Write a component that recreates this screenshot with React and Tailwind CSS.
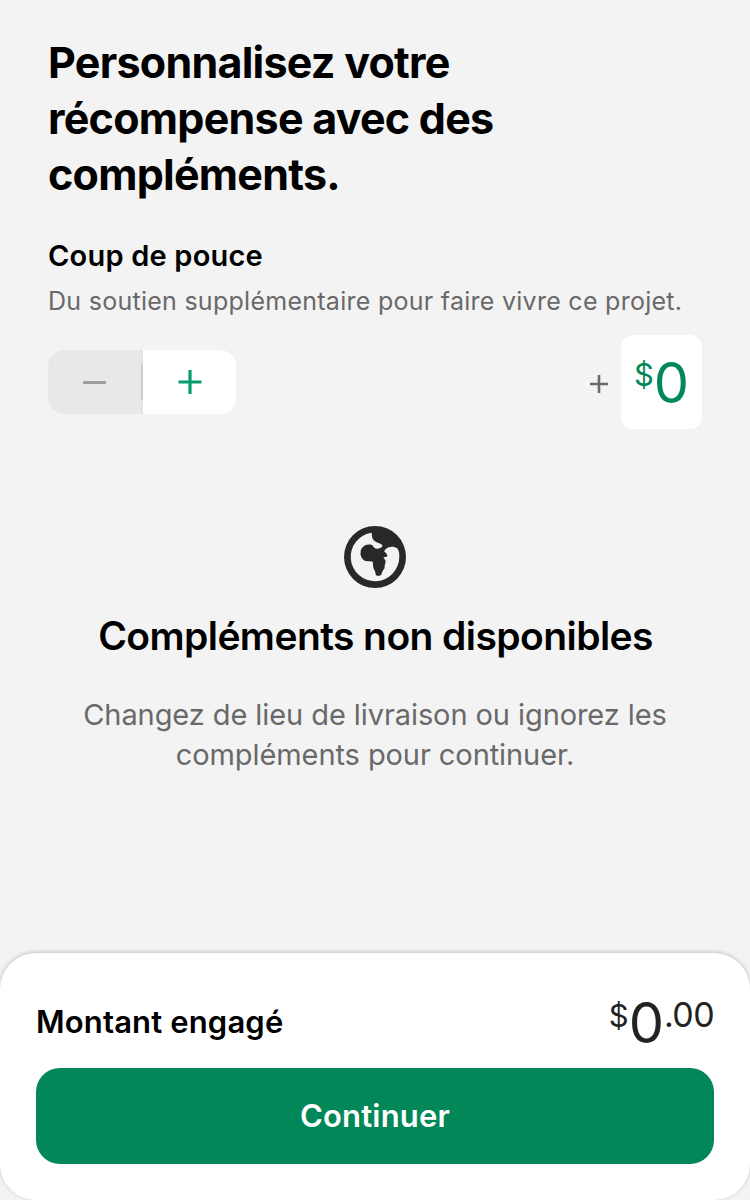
function Stepper() {
  return (
    <div className="flex h-16 w-[188px] overflow-hidden rounded-2xl bg-white">
      <button className="flex h-full w-[95px] items-center bg-[#e8e8e8] pl-[35px]" aria-label="Diminuer">
        <span className="h-[3px] w-[23px] rounded-[1px] bg-[#9b9f9c]" />
        <span className="ml-auto h-full w-0.5 bg-[#e3e3e3] py-3.5">
          <span className="block h-9 w-0.5 bg-[#cecece]" />
        </span>
      </button>
      <button className="flex h-full flex-1 items-center justify-center" aria-label="Augmenter">
        <svg width="24" height="24" viewBox="0 0 24 24" fill="none" stroke="#039d70" strokeWidth="3.2">
          <path d="M12 0v24M0.5 12h23" />
        </svg>
      </button>
    </div>
  );
}

function Globe() {
  return (
    <svg width="62" height="62" viewBox="0 0 62 62">
      <circle cx="31" cy="31" r="31" fill="#282828" />
      <path
        fill="#f3f3f3"
        d="M27.6 6.8C28 9.5 27.8 12 29.3 13.8C31.2 16 34.5 17.2 37.4 18.2Q39 19.3 38.2 20.8C36 22.4 33.8 23.2 31.5 22.4C29.2 21.4 29.3 20 28 19C25.5 18.4 23.5 18.5 21 19.2L18 21.8L16.7 24.5L16.5 28.6C17.2 31.8 18.8 33.8 21 34.9L28.5 35.6C29.3 37.4 28.7 39.9 29.5 42.2L31.2 45.8L31.9 49.2L34.5 50.1L37.2 48.9L38.4 45.4L40.6 42C40.2 39.5 41.8 37 41.6 34.8L39.4 31.2L43 30.8L43.4 29.4L42.2 27.2L40.2 25.6L41 23.8C43.5 20.8 49.5 19.5 53.4 22.5C55.1 25 55.5 28 55.3 31.4A24.3 24.3 0 1 1 27.6 6.8Z"
      />
    </svg>
  );
}

export default function App() {
  return (
    <div className="flex h-[1200px] w-[750px] flex-col overflow-hidden bg-[#f3f3f3] font-['Inter','Liberation_Sans',sans-serif] text-black">
      <main className="flex-1 px-12 pt-[34px]">
        <h1 className="text-[43px] font-bold leading-[56px] tracking-[-0.74px]">
          Personnalisez votre<br />récompense avec des<br />compléments.
        </h1>
        <h2 className="mt-[34px] text-[29px] font-semibold leading-10 tracking-[0.2px]">Coup de pouce</h2>
        <p className="mt-[7px] whitespace-nowrap text-[25px] leading-9 tracking-[0.27px] text-[#696969]">Du soutien supplémentaire pour faire vivre ce projet.</p>
        <div className="mt-4 flex h-[94px] items-center justify-between">
          <Stepper />
          <div className="flex items-center">
            <svg className="mr-[13px] mt-1" width="18" height="18" viewBox="0 0 18 18" fill="none" stroke="#696969" strokeWidth="2.6">
              <path d="M9 0v18M0 9h18" />
            </svg>
            <div className="flex h-[94px] w-[81px] items-start justify-center rounded-xl bg-white text-[#028858]">
              <span className="mt-5 text-[31px] leading-10">$</span>
              <span className="mt-[18px] text-[56px] leading-[60px]">0</span>
            </div>
          </div>
        </div>
        <section className="mt-[97px] flex flex-col items-center text-center">
          <Globe />
          <h2 className="mt-[23px] whitespace-nowrap pl-px text-[39px] font-semibold leading-[50px] tracking-[-0.58px]">Compléments non disponibles</h2>
          <p className="mt-[34px] whitespace-nowrap text-[29px] leading-10 tracking-[-0.08px] text-[#696969]">Changez de lieu de livraison ou ignorez les<br />compléments pour continuer.</p>
        </section>
      </main>
      <footer className="h-[247px] rounded-[36px] bg-white px-9 pt-[35px] shadow-[0_-1px_4px_rgba(0,0,0,0.2)]">
        <div className="flex h-20 items-start justify-between">
          <span className="mt-[14px] text-[31px] font-semibold leading-10 tracking-[0.15px]">Montant engagé</span>
          <div className="flex items-start text-[#222]">
            <span className="mt-2 text-[31px] leading-10">$</span>
            <span className="mt-[5px] text-[56px] leading-[60px]">0</span>
            <span className="mt-[7px] text-[34px] leading-10 tracking-[-0.6px]">.00</span>
          </div>
        </div>
        <button className="h-24 w-full rounded-3xl bg-[#028858] text-[31px] font-semibold tracking-[0.2px] text-white">Continuer</button>
      </footer>
    </div>
  );
}
